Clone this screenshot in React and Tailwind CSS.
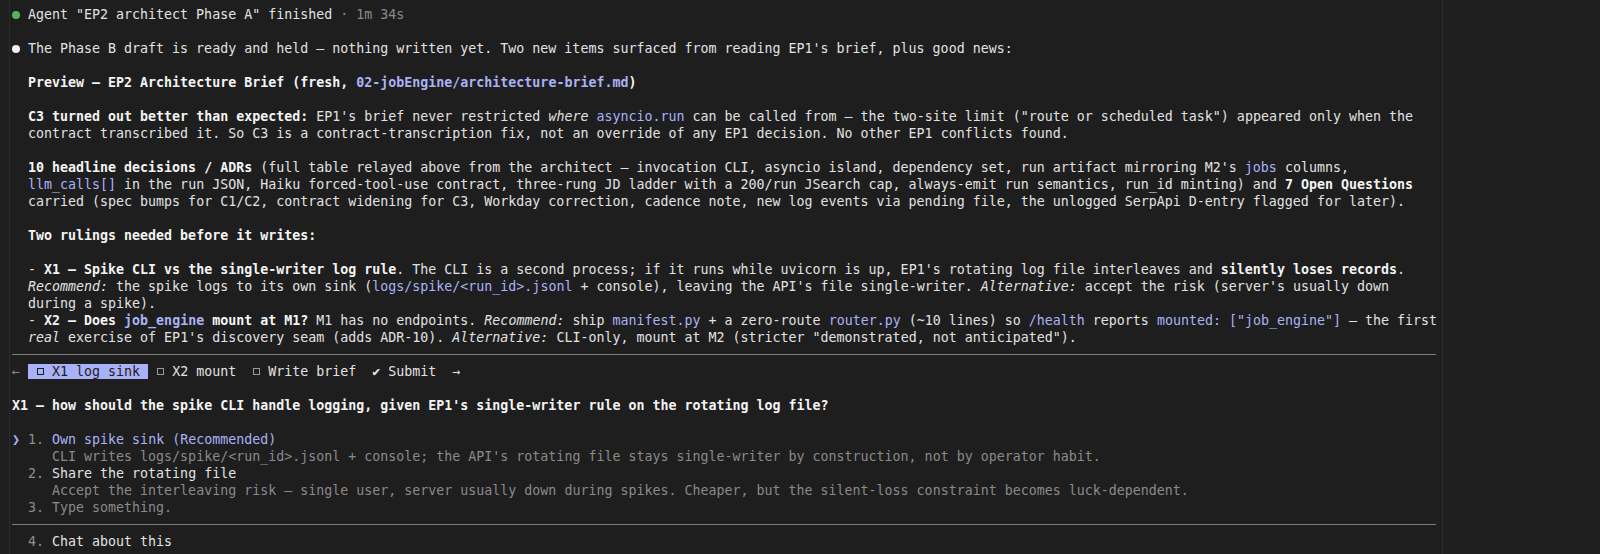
import React from 'react';

const Row = ({ children, className = '' }) => (
  <div className={`h-[17px] leading-[17px] whitespace-pre ${className}`}>{children || ' '}</div>
);

const B = ({ children }) => <span className="font-bold text-[#f4f4f4]">{children}</span>;
const I = ({ children }) => <span className="italic">{children}</span>;
const C = ({ children, bold }) => (
  <span className={`text-[#aab2f6] ${bold ? 'font-bold' : ''}`}>{children}</span>
);
const Dot = ({ color }) => (
  <span className="inline-flex w-[8px] h-[17px] items-center justify-center align-top">
    <span className={`w-[8px] h-[8px] shrink-0 rounded-full ${color}`} />
  </span>
);
const Box = ({ className = '' }) => (
  <span className="inline-flex w-[8px] h-[17px] items-center justify-center align-top">
    <span className={`w-[7px] h-[7px] border ${className}`} />
  </span>
);
const Separator = () => (
  <div className="h-[17px] flex items-center">
    <div className="w-[1424px] h-px bg-[#7c7c7c]" />
  </div>
);

export default function App() {
  return (
    <div
      className="flex min-h-screen bg-[#1e1e1e] text-[#e2e2e2] text-[13.3px]"
      style={{ fontFamily: '"DejaVu Sans Mono", "Liberation Mono", monospace' }}
    >
      <div className="w-[1443px] shrink-0 pl-[9px] border-r border-[#2b2b2b]">
        <div className="h-full border-l border-[#2b2b2b] pl-[2px] pt-[6px]">
          <Row>
            <Dot color="bg-[#4cb862]" /> Agent "EP2 architect Phase A" finished <span className="text-[#8a8a8a]">· 1m 34s</span>
          </Row>
          <Row />
          <Row>
            <Dot color="bg-[#f2f2f2]" /> The Phase B draft is ready and held — nothing written yet. Two new items surfaced from reading EP1's brief, plus good news:
          </Row>
          <Row />
          <Row>
            {'  '}<B>Preview — EP2 Architecture Brief (fresh, <C bold>02-jobEngine/architecture-brief.md</C>)</B>
          </Row>
          <Row />
          <Row>
            {'  '}<B>C3 turned out better than expected:</B> EP1's brief never restricted <I>where</I> <C>asyncio.run</C> can be called from — the two-site limit ("route or scheduled task") appeared only when the
          </Row>
          <Row>
            {'  '}contract transcribed it. So C3 is a contract-transcription fix, not an override of any EP1 decision. No other EP1 conflicts found.
          </Row>
          <Row />
          <Row>
            {'  '}<B>10 headline decisions / ADRs</B> (full table relayed above from the architect — invocation CLI, asyncio island, dependency set, run artifact mirroring M2's <C>jobs</C> columns,
          </Row>
          <Row>
            {'  '}<C>llm_calls[]</C> in the run JSON, Haiku forced-tool-use contract, three-rung JD ladder with a 200/run JSearch cap, always-emit run semantics, run_id minting) and <B>7 Open Questions</B>
          </Row>
          <Row>
            {'  '}carried (spec bumps for C1/C2, contract widening for C3, Workday correction, cadence note, new log events via pending file, the unlogged SerpApi D-entry flagged for later).
          </Row>
          <Row />
          <Row>
            {'  '}<B>Two rulings needed before it writes:</B>
          </Row>
          <Row />
          <Row>
            {'  '}- <B>X1 — Spike CLI vs the single-writer log rule</B>. The CLI is a second process; if it runs while uvicorn is up, EP1's rotating log file interleaves and <B>silently loses records</B>.
          </Row>
          <Row>
            {'  '}<I>Recommend:</I> the spike logs to its own sink (<C>logs/spike/&lt;run_id&gt;.jsonl</C> + console), leaving the API's file single-writer. <I>Alternative:</I> accept the risk (server's usually down
          </Row>
          <Row>{'  '}during a spike).</Row>
          <Row>
            {'  '}- <B>X2 — Does <C>job_engine</C> mount at M1?</B> M1 has no endpoints. <I>Recommend:</I> ship <C>manifest.py</C> + a zero-route <C>router.py</C> (~10 lines) so <C>/health</C> reports <C>mounted: ["job_engine"]</C> — the first
          </Row>
          <Row>
            {'  '}<I>real</I> exercise of EP1's discovery seam (adds ADR-10). <I>Alternative:</I> CLI-only, mount at M2 (stricter "demonstrated, not anticipated").
          </Row>
          <Separator />
          <Row>
            <span className="text-[#8a8a8a]">←</span>{' '}
            <span className="bg-[#a9b1f7] text-[#1e1e1e]">
              {' '}<Box className="border-[#1e1e1e]" /> X1 log sink{' '}
            </span>
            {' '}<Box className="border-[#9a9a9a]" /> X2 mount{'  '}<Box className="border-[#9a9a9a]" /> Write brief{'  '}✔ Submit{'  '}→
          </Row>
          <Row />
          <Row>
            <B>X1 — how should the spike CLI handle logging, given EP1's single-writer rule on the rotating log file?</B>
          </Row>
          <Row />
          <Row>
            <span className="text-[#aab2f6]">❯</span> <span className="text-[#8f8f8f]">1.</span> <span className="text-[#aab2f6]">Own spike sink (Recommended)</span>
          </Row>
          <Row className="text-[#8a8a8a]">
            {'     '}CLI writes logs/spike/&lt;run_id&gt;.jsonl + console; the API's rotating file stays single-writer by construction, not by operator habit.
          </Row>
          <Row>
            {'  '}<span className="text-[#8f8f8f]">2.</span> Share the rotating file
          </Row>
          <Row className="text-[#8a8a8a]">
            {'     '}Accept the interleaving risk — single user, server usually down during spikes. Cheaper, but the silent-loss constraint becomes luck-dependent.
          </Row>
          <Row className="text-[#8a8a8a]">{'  '}3. Type something.</Row>
          <Separator />
          <Row>
            {'  '}<span className="text-[#8f8f8f]">4.</span> Chat about this
          </Row>
        </div>
      </div>
      <div className="flex-1" />
    </div>
  );
}
